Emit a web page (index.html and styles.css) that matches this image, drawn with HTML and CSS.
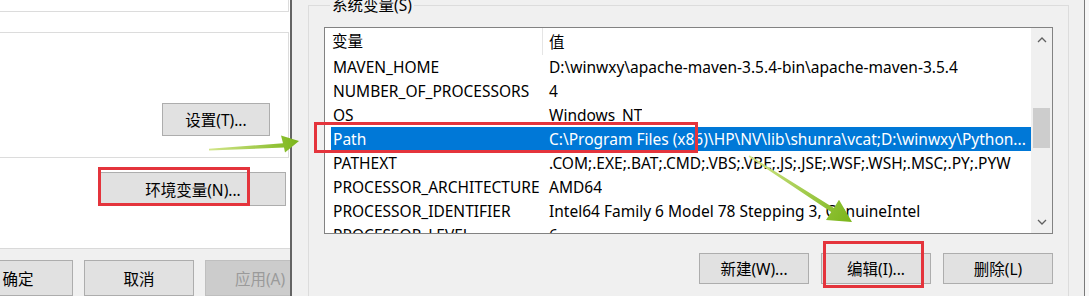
FILE: index.html
```html
<!DOCTYPE html>
<html lang="zh-CN">
<head>
    <meta charset="UTF-8">
    <title>环境变量</title>
    <link rel="stylesheet" href="styles.css">
</head>
<body>
    <div class="screen">
        <div class="sys-props">
            <div class="tab-page">
                <div class="box box-top"></div>
                <div class="box box-startup">
                    <button class="btn btn-settings">设置(T)...</button>
                </div>
                <button class="btn btn-env">环境变量(N)...</button>
            </div>
            <div class="dialog-buttons">
                <button class="btn">确定</button>
                <button class="btn">取消</button>
                <button class="btn" disabled>应用(A)</button>
            </div>
        </div>

        <div class="env-dialog">
            <div class="group">
                <div class="group-title">系统变量(S)</div>
                <div class="listview">
                    <div class="list-body">
                        <div class="list-header">
                            <span class="col-name">变量</span>
                            <span class="col-value">值</span>
                        </div>
                        <div class="row"><span class="col-name">MAVEN_HOME</span><span class="col-value">D:\winwxy\apache-maven-3.5.4-bin\apache-maven-3.5.4</span></div>
                        <div class="row"><span class="col-name">NUMBER_OF_PROCESSORS</span><span class="col-value">4</span></div>
                        <div class="row"><span class="col-name">OS</span><span class="col-value">Windows_NT</span></div>
                        <div class="row selected"><span class="col-name">Path</span><span class="col-value">C:\Program Files (x86)\HP\NV\lib\shunra\vcat;D:\winwxy\Python...</span></div>
                        <div class="row"><span class="col-name">PATHEXT</span><span class="col-value">.COM;.EXE;.BAT;.CMD;.VBS;.VBE;.JS;.JSE;.WSF;.WSH;.MSC;.PY;.PYW</span></div>
                        <div class="row"><span class="col-name">PROCESSOR_ARCHITECTURE</span><span class="col-value">AMD64</span></div>
                        <div class="row"><span class="col-name">PROCESSOR_IDENTIFIER</span><span class="col-value">Intel64 Family 6 Model 78 Stepping 3, GenuineIntel</span></div>
                        <div class="row"><span class="col-name">PROCESSOR_LEVEL</span><span class="col-value">6</span></div>
                    </div>
                    <div class="scrollbar">
                        <svg class="chevron" width="10" height="6" viewBox="0 0 10 6"><polyline points="1,5 5,1 9,5" fill="none" stroke="#606060" stroke-width="1.3"/></svg>
                        <div class="track"><div class="thumb"></div></div>
                        <svg class="chevron" width="10" height="6" viewBox="0 0 10 6"><polyline points="1,1 5,5 9,1" fill="none" stroke="#606060" stroke-width="1.3"/></svg>
                    </div>
                </div>
                <div class="list-buttons">
                    <button class="btn">新建(W)...</button>
                    <button class="btn">编辑(I)...</button>
                    <button class="btn">删除(L)</button>
                </div>
            </div>
        </div>

        <div class="edge"></div>

        <!-- annotations drawn over the screenshot -->
        <svg class="annotations" width="1089" height="296" viewBox="0 0 1089 296">
            <defs>
                <linearGradient id="g1" x1="209" y1="150" x2="299" y2="141" gradientUnits="userSpaceOnUse">
                    <stop offset="0" stop-color="#d3e68a"/>
                    <stop offset="1" stop-color="#7ab51a"/>
                </linearGradient>
                <linearGradient id="g2" x1="749" y1="156" x2="851" y2="222" gradientUnits="userSpaceOnUse">
                    <stop offset="0" stop-color="#d3e68a"/>
                    <stop offset="1" stop-color="#7ab51a"/>
                </linearGradient>
            </defs>
            <rect x="99.5" y="168.5" width="149" height="36" fill="none" stroke="#e4343c" stroke-width="3"/>
            <rect x="315.5" y="123.5" width="381" height="28" fill="none" stroke="#e4343c" stroke-width="3"/>
            <rect x="824.5" y="242.5" width="98" height="44" fill="none" stroke="#e4343c" stroke-width="3"/>
            <polygon points="209,148.8 283,143.2 281,135.5 299,141 285,152.5 284,147.5 209,150.6" fill="url(#g1)"/>
            <polygon points="749.4,155.3 833.9,207.9 839,199.8 852,222 826,220 831.2,212.1 748.6,156.7" fill="url(#g2)"/>
        </svg>
    </div>
</body>
</html>
```

FILE: styles.css
```css
* {
    margin: 0;
    padding: 0;
    box-sizing: border-box;
}

body {
    width: 1089px;
    height: 296px;
    overflow: hidden;
    font-family: 'Noto Sans', 'Noto Sans CJK SC', sans-serif;
    font-size: 15.5px;
    color: #000;
    background: #f0f0f0;
}

.screen {
    position: relative;
    display: flex;
    width: 1089px;
    height: 296px;
    overflow: hidden;
}

/* generic windows button */
.btn {
    display: flex;
    align-items: center;
    justify-content: center;
    flex-shrink: 0;
    width: 110px;
    height: 34px;
    border: 1px solid #adadad;
    background: #e1e1e1;
    font: inherit;
    color: #000;
    white-space: nowrap;
}

.btn:disabled {
    background: #cccccc;
    border-color: #bfbfbf;
    color: #9a9a9a;
}

/* left window: system properties */
.sys-props {
    width: 290px;
    flex-shrink: 0;
    display: flex;
    flex-direction: column;
    overflow: hidden;
}

.tab-page {
    height: 251px;
    background: #fff;
    border-bottom: 1px solid #d9d9d9;
    display: flex;
    flex-direction: column;
}

.box {
    width: 289px;
    border-right: 1px solid #dcdcdc;
    border-bottom: 1px solid #dcdcdc;
}

.box-top {
    height: 12px;
}

.box-startup {
    margin-top: 20px;
    height: 126px;
    border-top: 1px solid #dcdcdc;
    display: flex;
    justify-content: flex-end;
    align-items: flex-start;
}

.btn-settings {
    width: 108px;
    height: 33px;
    margin-top: 70px;
    margin-right: 18px;
}

.btn-env {
    width: 186px;
    margin-top: 14px;
    margin-left: 100px;
}

.dialog-buttons {
    flex: 1;
    display: flex;
    gap: 11px;
    padding-top: 11px;
    margin-left: -37px;
}

.dialog-buttons .btn {
    height: 36px;
}

/* right window: environment variables */
.env-dialog {
    width: 795px;
    flex-shrink: 0;
    border-left: 2px solid #646464;
    border-right: 1px solid #7a7a7a;
    padding: 5px 15px 0 16px;
    background: #f0f0f0;
}

.group {
    height: 320px;
    border: 1px solid #dcdcdc;
    padding: 0 15px;
    display: flex;
    flex-direction: column;
}

.group-title {
    align-self: flex-start;
    margin: -12px 0 0 6px;
    padding: 0 2px;
    line-height: 22px;
    background: #f0f0f0;
}

.listview {
    margin-top: 11px;
    height: 207px;
    border: 1px solid #828282;
    background: #fff;
    display: flex;
}

.list-body {
    flex: 1;
    overflow: hidden;
}

.list-header {
    display: flex;
    height: 27px;
    align-items: center;
    margin-left: 6px;
}

.list-header .col-name {
    height: 27px;
    line-height: 27px;
    padding-left: 1px;
    border-right: 1px solid #e5e5e5;
}

.col-name {
    width: 212px;
    flex-shrink: 0;
    padding-left: 2px;
    white-space: nowrap;
    overflow: hidden;
}

.col-value {
    padding-left: 6px;
    white-space: nowrap;
    overflow: hidden;
}

.row {
    display: flex;
    height: 24px;
    line-height: 24px;
    margin-left: 6px;
}

.row.selected {
    background: #0078d7;
    color: #fff;
}

.scrollbar {
    width: 21px;
    flex-shrink: 0;
    background: #f0f0f0;
    display: flex;
    flex-direction: column;
    align-items: center;
    padding: 9px 0 8px;
}

.chevron {
    display: block;
    flex-shrink: 0;
}

.track {
    flex: 1;
    width: 100%;
    padding: 0 2px;
}

.thumb {
    margin-top: 65px;
    height: 40px;
    background: #cdcdcd;
}

.list-buttons {
    display: flex;
    justify-content: flex-end;
    gap: 12px;
    margin-top: 19px;
}

.list-buttons .btn {
    height: 31px;
}

.edge {
    flex: 1;
    background: #f7f7f7;
}

.annotations {
    position: absolute;
    left: 0;
    top: 0;
    pointer-events: none;
}
```
